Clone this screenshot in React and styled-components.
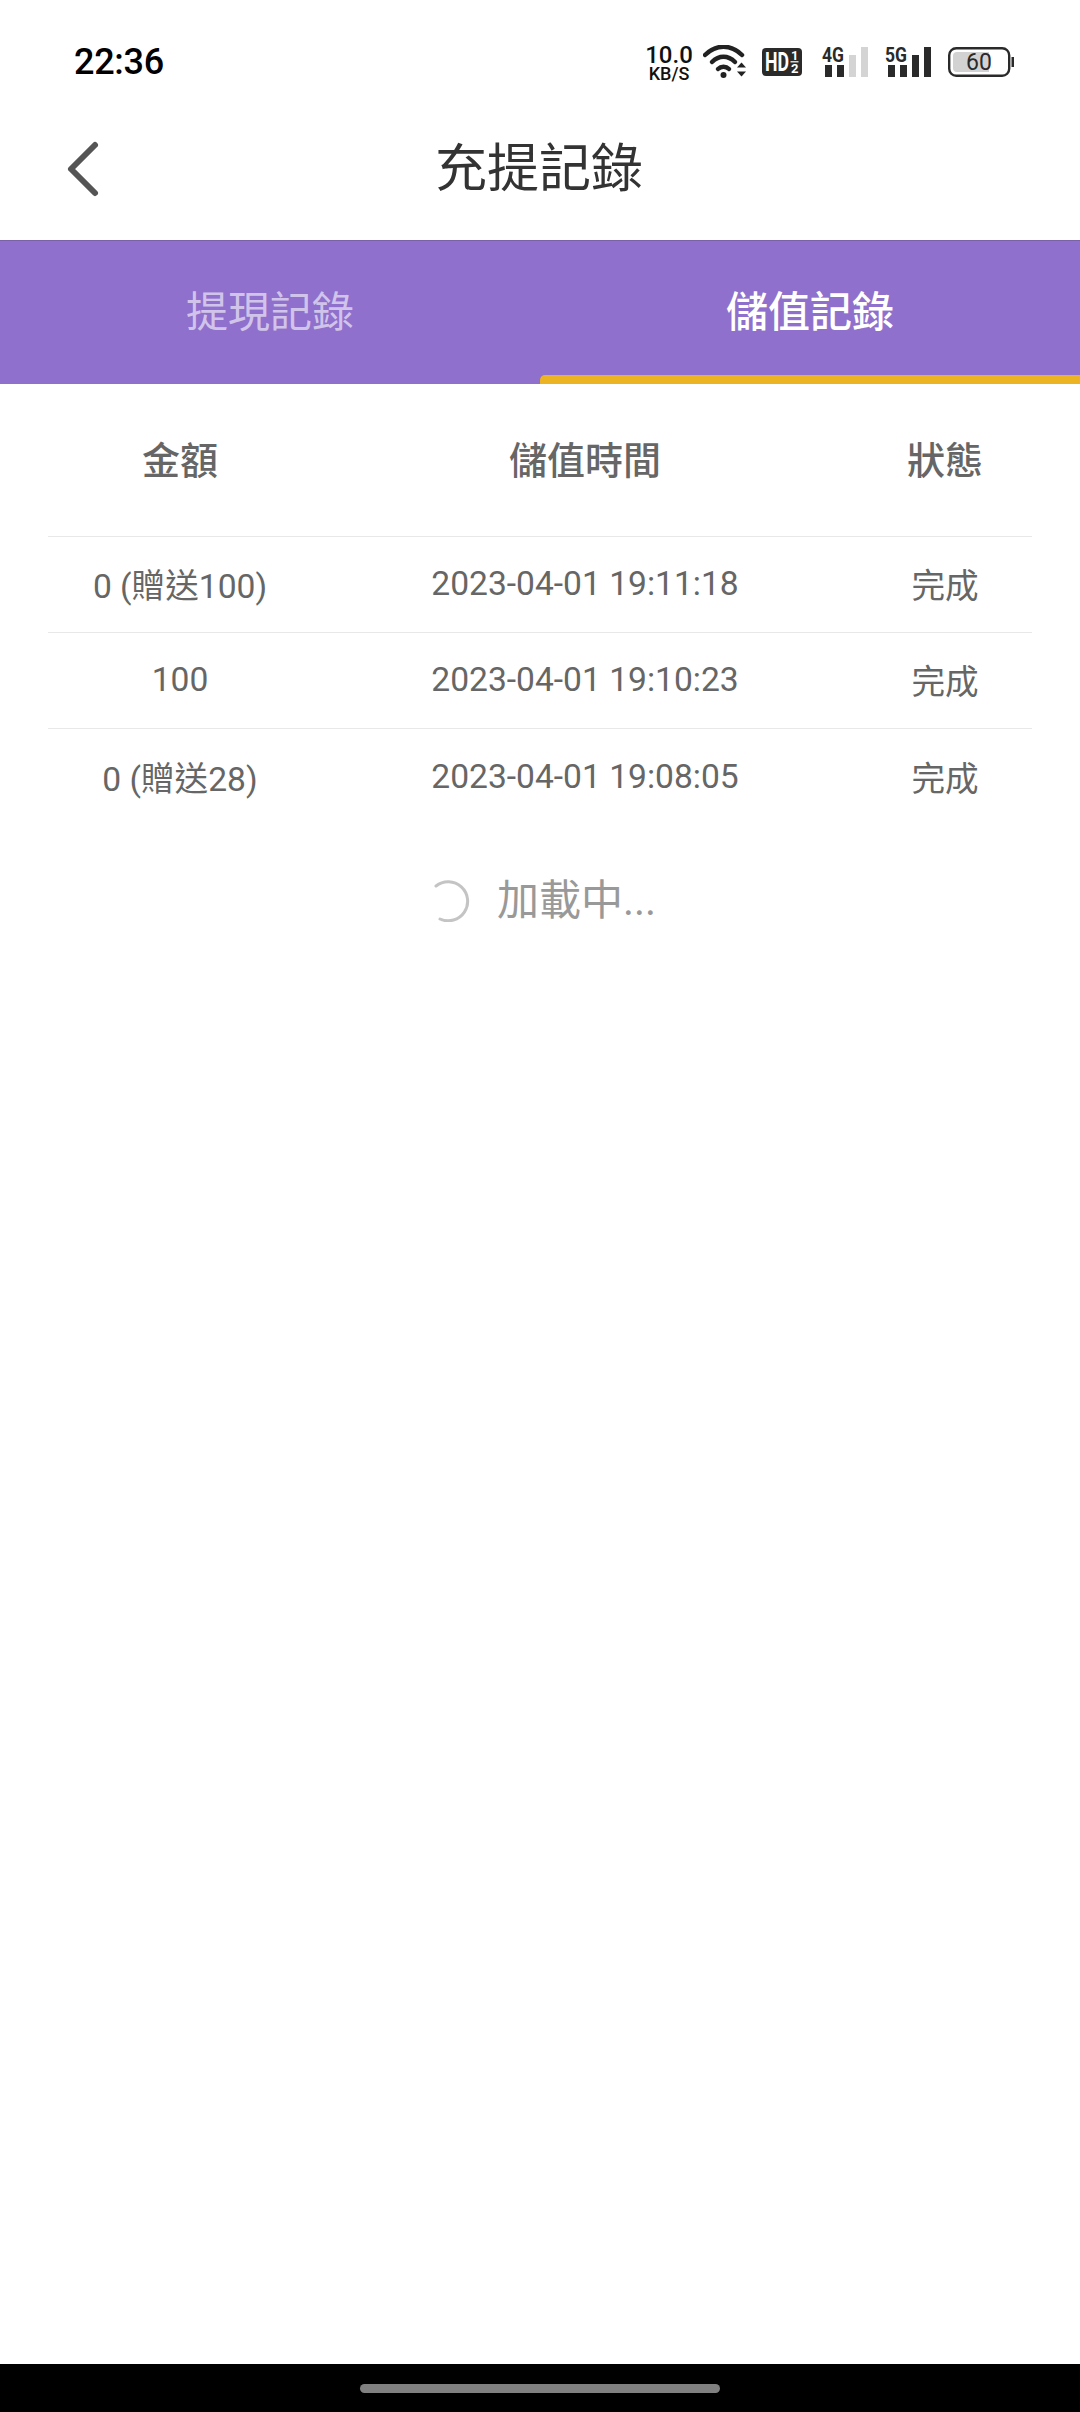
import React from 'react';
import styled, { createGlobalStyle } from 'styled-components';

const GlobalStyle = createGlobalStyle`
  html, body {
    margin: 0;
    padding: 0;
    background: #fff;
    font-family: Roboto, "Noto Sans CJK TC", sans-serif;
  }
`;

const Page = styled.div`
  width: 1080px;
  height: 2412px;
  display: flex;
  flex-direction: column;
  background: #fff;
  overflow: hidden;
`;

const StatusBar = styled.div`
  height: 100px;
  flex: none;
  display: flex;
  align-items: center;
  justify-content: space-between;
  padding: 24px 66px 0 74px;
  box-sizing: border-box;
`;

const Time = styled.div`
  font-size: 36px;
  font-weight: 500;
  color: #000;
  letter-spacing: -0.3px;
`;

const StatusIcons = styled.div`
  display: flex;
  align-items: center;
`;

const NetSpeed = styled.div`
  width: 46px;
  margin-right: 11px;
  padding-top: 3px;
  display: flex;
  flex-direction: column;
  align-items: center;
  color: #111;
  font-weight: 500;
  line-height: 1;
`;

const NetValue = styled.span`
  font-size: 24px;
  height: 20px;
  line-height: 20px;
`;

const NetUnit = styled.span`
  font-size: 18px;
  height: 18px;
  line-height: 18px;
`;

const Icon = styled.svg`
  display: block;
  flex: none;
  margin-right: ${(props) => props.$gap || 0}px;
`;

const Header = styled.div`
  position: relative;
  height: 140px;
  flex: none;
  display: flex;
  align-items: center;
  justify-content: center;
`;

const BackButton = styled.div`
  position: absolute;
  left: 65px;
  top: 40px;
  display: flex;
`;

const Title = styled.div`
  font-size: 52px;
  line-height: 60px;
  color: #333;
  margin-right: 2px;
`;

const Tabs = styled.div`
  height: 144px;
  flex: none;
  display: flex;
  box-sizing: border-box;
  background: #8f70cc;
  border-top: 1px solid #7a62ab;
`;

const Tab = styled.div`
  flex: 1;
  display: flex;
  align-items: center;
  justify-content: center;
  position: relative;
  padding-bottom: 9px;
  font-size: 42px;
  font-weight: ${(props) => (props.$active ? 500 : 400)};
  color: ${(props) => (props.$active ? '#fff' : 'rgba(255, 255, 255, 0.6)')};

  ${(props) =>
    props.$active &&
    `
    &::after {
      content: '';
      position: absolute;
      left: 0;
      right: 0;
      bottom: 0;
      height: 9px;
      background: #ecb322;
      border-radius: 5px 0 0 0;
    }
  `}
`;

const Table = styled.div`
  margin: 0 48px;
  display: flex;
  flex-direction: column;
`;

const Row = styled.div`
  display: grid;
  grid-template-columns: 264px 546px 174px;
  align-items: center;
  height: ${(props) => (props.$head ? 153 : 96)}px;
  padding-bottom: ${(props) => (props.$head ? 5 : 2)}px;
  box-sizing: border-box;
  border-bottom: ${(props) => (props.$last ? 'none' : '1px solid #e8e8e8')};
`;

const Cell = styled.div`
  text-align: center;
  white-space: nowrap;
  font-size: ${(props) => (props.$head ? 38 : 33.6)}px;
  font-weight: ${(props) => (props.$head ? 500 : 400)};
  color: #666;
`;

const Loading = styled.div`
  display: flex;
  align-items: center;
  justify-content: center;
  gap: 27px;
  margin-top: 46px;
  padding-left: 8px;
  color: #999;
  font-size: 42px;
  line-height: 60px;
`;

const NavBar = styled.div`
  margin-top: auto;
  height: 48px;
  flex: none;
  display: flex;
  align-items: center;
  justify-content: center;
  background: #000;
`;

const HomePill = styled.div`
  width: 360px;
  height: 9px;
  border-radius: 5px;
  background: #808080;
`;

const records = [
  { amount: '0 (贈送100)', time: '2023-04-01 19:11:18', state: '完成' },
  { amount: '100', time: '2023-04-01 19:10:23', state: '完成' },
  { amount: '0 (贈送28)', time: '2023-04-01 19:08:05', state: '完成' },
];

function WifiIcon() {
  return (
    <Icon $gap={15} width="44" height="34" viewBox="0 0 44 34" fill="none">
      <path d="M2 10C13-1 28-1 39 10" stroke="#222" strokeWidth="4.5" strokeLinecap="round" />
      <path d="M9 17C16 10 25 10 32 17" stroke="#222" strokeWidth="4.5" strokeLinecap="round" />
      <path d="M15 24C18 21 23 21 26 24" stroke="#222" strokeWidth="4.5" strokeLinecap="round" />
      <circle cx="20.5" cy="30" r="3" fill="#222" />
      <path d="M34 22.500L38.500 17.500L43 22.500Z" fill="#222" />
      <path d="M34 26.500L38.500 31.500L43 26.500Z" fill="#222" />
    </Icon>
  );
}

function HdIcon() {
  return (
    <Icon $gap={20} width="40" height="28" viewBox="0 0 40 28">
      <rect width="40" height="28" rx="4" fill="#2a2a2a" />
      <text x="3" y="23" fontFamily="Roboto" fontSize="26" fontWeight="700" fill="#fff" textLength="24" lengthAdjust="spacingAndGlyphs">HD</text>
      <text x="29" y="12" fontFamily="Roboto" fontSize="13" fontWeight="700" fill="#fff">1</text>
      <rect x="28.500" y="13.200" width="8" height="1.200" fill="#fff" />
      <text x="29" y="25" fontFamily="Roboto" fontSize="13" fontWeight="700" fill="#fff">2</text>
    </Icon>
  );
}

// Signal strength: label above the two short bars, taller bars beside it
function SignalIcon({ label, level, gap }) {
  const bars = [
    { x: 3, h: 12 },
    { x: 15, h: 12 },
    { x: 27, h: 22 },
    { x: 39, h: 30 },
  ];
  return (
    <Icon $gap={gap} width="46" height="42" viewBox="0 -6 46 42">
      <text x="0" y="15" fontFamily="Roboto" fontSize="21" fontWeight="700" fill="#2a2a2a" textLength="22" lengthAdjust="spacingAndGlyphs">{label}</text>
      {bars.map((bar, i) => (
        <rect key={bar.x} x={bar.x} y={30 - bar.h} width="7" height={bar.h} fill={i < level ? '#2a2a2a' : '#d4d4d4'} />
      ))}
    </Icon>
  );
}

function BatteryIcon() {
  return (
    <Icon width="66" height="30" viewBox="0 0 66 30">
      <rect x="1.200" y="1.200" width="60" height="27.600" rx="7" fill="none" stroke="#2a2a2a" strokeWidth="2.400" />
      <path d="M5 9a4 4 0 0 1 4-4H41V25H9a4 4 0 0 1-4-4Z" fill="#d2d2d2" />
      <rect x="63.500" y="10" width="2.500" height="10" fill="#2a2a2a" />
      <text x="31" y="23" textAnchor="middle" fontFamily="Roboto" fontSize="23" fill="#2a2a2a">60</text>
    </Icon>
  );
}

export default function App() {
  return (
    <Page>
      <GlobalStyle />
      <StatusBar>
        <Time>22:36</Time>
        <StatusIcons>
          <NetSpeed>
            <NetValue>10.0</NetValue>
            <NetUnit>KB/S</NetUnit>
          </NetSpeed>
          <WifiIcon />
          <HdIcon />
          <SignalIcon label="4G" level={2} gap={17} />
          <SignalIcon label="5G" level={4} gap={17} />
          <BatteryIcon />
        </StatusIcons>
      </StatusBar>
      <Header>
        <BackButton>
          <svg width="40" height="60" viewBox="0 0 40 60" fill="none">
            <path d="M30 5L6 29L30 53" stroke="#555" strokeWidth="6" strokeLinecap="round" strokeLinejoin="round" />
          </svg>
        </BackButton>
        <Title>充提記錄</Title>
      </Header>
      <Tabs>
        <Tab>提現記錄</Tab>
        <Tab $active>儲值記錄</Tab>
      </Tabs>
      <Table>
        <Row $head>
          <Cell $head>金額</Cell>
          <Cell $head>儲值時間</Cell>
          <Cell $head>狀態</Cell>
        </Row>
        {records.map((record, i) => (
          <Row key={record.time} $last={i === records.length - 1}>
            <Cell>{record.amount}</Cell>
            <Cell>{record.time}</Cell>
            <Cell>{record.state}</Cell>
          </Row>
        ))}
      </Table>
      <Loading>
        <svg width="38" height="42" viewBox="0 0 38 42" fill="none">
          <path d="M4 6A19.500 19.500 0 1 1 8 39" stroke="#c4c4c4" strokeWidth="3" strokeLinecap="round" />
        </svg>
        <span>加載中...</span>
      </Loading>
      <NavBar>
        <HomePill />
      </NavBar>
    </Page>
  );
}
